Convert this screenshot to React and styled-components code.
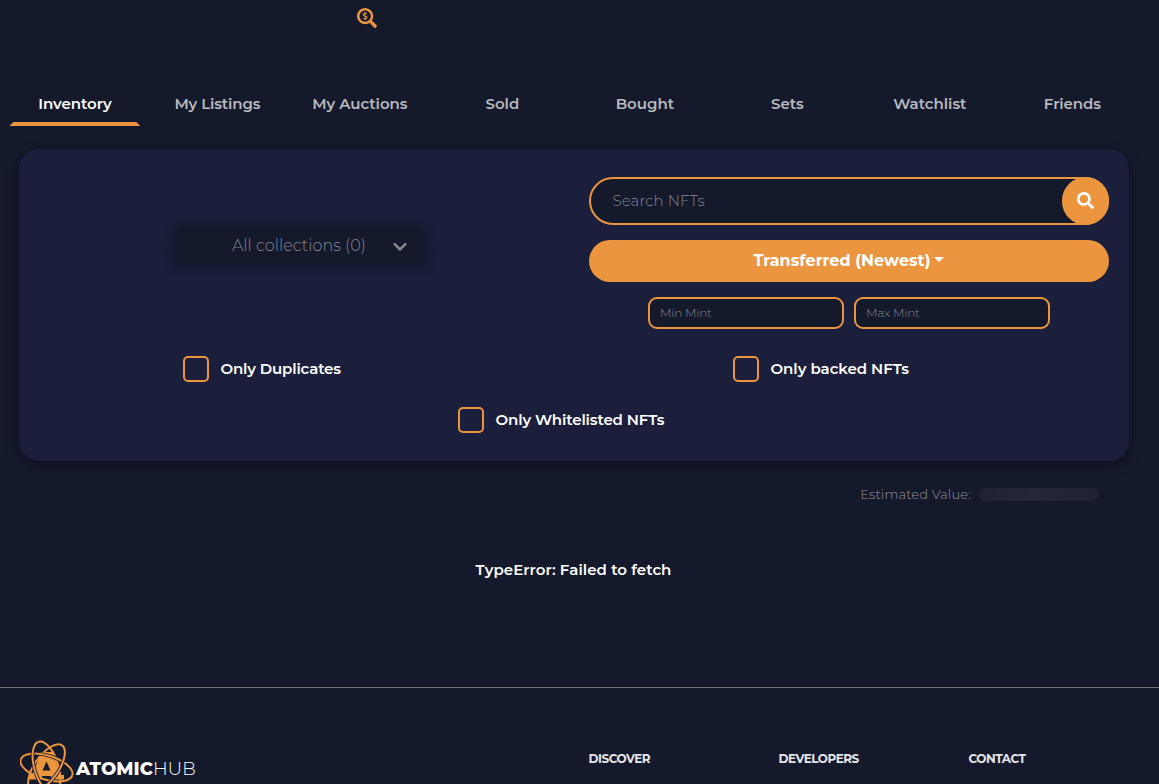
import React from "react";
import styled, { createGlobalStyle } from "styled-components";
import { FaSearch, FaSearchDollar } from "react-icons/fa";

const orange = "#eb953f";
const dark = "#14192c";

const GlobalStyle = createGlobalStyle`
    * {
        box-sizing: border-box;
    }
    html, body {
        margin: 0;
        height: 784px;
        overflow: hidden;
        background-color: ${dark};
    }
    body {
        color: #fff;
        font-family: Montserrat, Inter, "Open Sans", sans-serif;
        font-size: 15px;
    }
    input, button {
        font-family: inherit;
    }
`

const Page = styled.div`
    height: 784px;
    overflow: hidden;
`

const TopBar = styled.header`
    height: 80px;
    padding: 8px 0 0 357px;
    color: ${orange};
`

// tabs

const Tabs = styled.nav`
    display: grid;
    grid-template-columns: repeat(8, 142.5px);
    margin-left: 4.4px;
    height: 69px;
`

const Tab = styled.a`
    width: 131px;
    height: 46px;
    margin-left: 5px;
    padding-top: 14px;
    text-align: center;
    line-height: 20px;
    font-size: 15px;
    font-weight: 600;
    letter-spacing: ${props => props.$spacing || 0}px;
    color: ${props => props.$active ? '#fff' : '#b9babf'};
    white-space: nowrap;
    &::after {
        content: "";
        display: block;
        height: 4px;
        margin-top: 8px;
        background-color: ${props => props.$active ? orange : 'transparent'};
        clip-path: polygon(4px 0, calc(100% - 4px) 0, 100% 100%, 0 100%);
    }
`

// filter panel

const Panel = styled.section`
    width: 1110px;
    height: 312px;
    margin-left: 19px;
    padding: 28px 20px 0;
    border-radius: 20px;
    background-color: #1b1f3b;
    box-shadow: 0 4px 14px rgba(0, 0, 0, 0.35);
`

const Filters = styled.div`
    display: flex;
    justify-content: space-between;
    height: 152px;
`

const CollectionSelect = styled.div`
    display: flex;
    align-items: center;
    width: 250px;
    height: 38px;
    margin: 50px 0 0 136px;
    padding: 0 17px 0 57px;
    justify-content: space-between;
    border-radius: 10px;
    background-color: ${dark};
    box-shadow: 0 0 10px 3px ${dark};
    color: #858790;
    font-size: 16px;
    font-weight: 300;
    white-space: nowrap;
`

const SelectText = styled.span`
    letter-spacing: 0.05px;
    margin-top: -1px;
`

const SearchColumn = styled.div`
    display: flex;
    flex-direction: column;
    align-items: center;
    width: 520px;
    gap: 15px;
`

const SearchBox = styled.div`
    display: flex;
    flex: none;
    width: 520px;
    height: 48px;
    border: 2px solid ${orange};
    border-radius: 24px;
    background-color: ${dark};
`

const SearchInput = styled.input`
    flex: 1;
    padding: 0 21.5px 2px;
    border: none;
    outline: none;
    background: none;
    color: #fff;
    font-size: 15px;
    font-weight: 300;
    letter-spacing: 0.1px;
    &::placeholder {
        color: #808b96;
        opacity: 1;
    }
`

const SearchButton = styled.button`
    display: flex;
    align-items: center;
    justify-content: center;
    width: 47px;
    height: 48px;
    margin: -2px -2px 0 0;
    padding: 0 0 1px;
    border: none;
    border-radius: 24px;
    background-color: ${orange};
    color: #fff;
`

const SortButton = styled.button`
    display: flex;
    flex: none;
    align-items: center;
    justify-content: center;
    gap: 4px;
    width: 520px;
    height: 42px;
    padding: 0 0 2px;
    border: none;
    border-radius: 21px;
    background-color: ${orange};
    color: #fff;
    font-size: 16px;
    font-weight: 700;
    letter-spacing: 0.07px;
`

const Caret = styled.span`
    width: 0;
    height: 0;
    margin-top: -1px;
    border-top: 5px solid #fff;
    border-left: 5px solid transparent;
    border-right: 5px solid transparent;
`

const MintRow = styled.div`
    display: flex;
    gap: 10px;
`

const MintInput = styled.input`
    width: 196px;
    height: 32px;
    padding: 0 10px 2px;
    border: 2px solid ${orange};
    border-radius: 9px;
    background-color: ${dark};
    color: #fff;
    font-size: 12px;
    font-weight: 300;
    letter-spacing: -0.2px;
    &::placeholder {
        color: #888a90;
        opacity: 1;
    }
`

const CheckGrid = styled.div`
    display: grid;
    grid-template-columns: 550px 1fr;
    row-gap: 25px;
    margin-top: 27px;
    padding-left: 144px;
`

const Check = styled.label`
    display: flex;
    align-items: center;
    gap: 11.5px;
    height: 26px;
    font-size: 15px;
    font-weight: 600;
    letter-spacing: ${props => props.$spacing || 0}px;
    ${props => props.$wide && 'grid-column: 1 / 3; margin-left: 275px;'}
`

const CheckText = styled.span`
    padding-bottom: 2px;
`

const Box = styled.span`
    width: 26px;
    height: 26px;
    border: 2px solid ${orange};
    border-radius: 5px;
`

// value and error

const Estimate = styled.div`
    display: flex;
    align-items: center;
    justify-content: flex-end;
    gap: 8px;
    height: 20px;
    margin: 23px 60px 0 0;
    color: #92949e;
    font-size: 13px;
    font-weight: 300;
    letter-spacing: 0.18px;
`

const Placeholder = styled.span`
    width: 120px;
    height: 13px;
    border-radius: 7px;
    background: linear-gradient(90deg, #1e2234, #242738 45%, #1e2234);
`

const ErrorText = styled.p`
    width: 1147px;
    height: 20px;
    margin: 56px 0 107px;
    text-align: center;
    line-height: 20px;
    font-weight: 600;
    letter-spacing: 0.07px;
`

// footer

const Footer = styled.footer`
    display: grid;
    grid-template-columns: 568px 190px 190px 1fr;
    height: 97px;
    padding: 51px 0 0 20px;
    border-top: 1px solid #6f727b;
`

const Brand = styled.div`
    display: flex;
    align-items: flex-start;
`

const BrandName = styled.span`
    margin: 20px 0 0 2px;
    line-height: 20px;
    font-size: 18px;
    font-weight: 800;
    letter-spacing: 0.1px;
    b {
        font-weight: 300;
    }
`

const FooterTitle = styled.h4`
    margin: 12px 0 0 0.5px;
    line-height: 16px;
    font-size: 12px;
    font-weight: 700;
    color: #e4e5e8;
    letter-spacing: ${props => props.$spacing || 0}px;
`

// sweep picks the half of the orbit that passes in front of the letter
const orbits = [
    { angle: 17, sweep: 1 },
    { angle: 73, sweep: 0 },
    { angle: 125, sweep: 1 },
]

const AtomLogo = () => (
    <svg width="54" height="58" viewBox="0 0 54 58" fill="none">
        {orbits.map(({ angle }) => (
            <ellipse key={angle} cx="26.5" cy="28.5" rx="27" ry="12" stroke={orange} strokeWidth="2" transform={`rotate(${angle} 26.5 28.5)`} />
        ))}
        <path d="M21 13h13v3.5l7 19.5h3v4.5H31V37h-9v3.5H9V36h3l8-19.5z" fill={orange} />
        <path d="M26.5 22.5l4 9h-8z" fill={dark} />
        {orbits.map(({ angle, sweep }) => (
            <g key={angle} transform={`rotate(${angle} 26.5 28.5)`}>
                <path d={`M-.5 28.5A27 12 0 0 ${sweep} 53.5 28.5`} stroke={dark} strokeWidth="3.6" />
                <path d={`M-.5 28.5A27 12 0 0 ${sweep} 53.5 28.5`} stroke={orange} strokeWidth="2" />
            </g>
        ))}
    </svg>
)

const tabs = [
    { label: 'Inventory', active: true, spacing: -0.05 },
    { label: 'My Listings', spacing: -0.12 },
    { label: 'My Auctions', spacing: -0.05 },
    { label: 'Sold' },
    { label: 'Bought' },
    { label: 'Sets' },
    { label: 'Watchlist' },
    { label: 'Friends', spacing: -0.08 },
]

export default function App() {
    return <Page>
        <GlobalStyle />
        <TopBar><FaSearchDollar size={20} /></TopBar>
        <Tabs>
            {tabs.map(tab => (
                <Tab key={tab.label} $active={tab.active} $spacing={tab.spacing}>{tab.label}</Tab>
            ))}
        </Tabs>
        <Panel>
            <Filters>
                <CollectionSelect>
                    <SelectText>All collections (0)</SelectText>
                    <svg width="16" height="12" viewBox="0 0 16 12" fill="none" stroke="#85878f" strokeWidth="2.6">
                        <path d="M2 3.4l6 6 6-6" />
                    </svg>
                </CollectionSelect>
                <SearchColumn>
                    <SearchBox>
                        <SearchInput placeholder="Search NFTs" />
                        <SearchButton><FaSearch size={17} /></SearchButton>
                    </SearchBox>
                    <SortButton>Transferred (Newest)<Caret /></SortButton>
                    <MintRow>
                        <MintInput placeholder="Min Mint" />
                        <MintInput placeholder="Max Mint" />
                    </MintRow>
                </SearchColumn>
            </Filters>
            <CheckGrid>
                <Check $spacing={-0.15}><Box /><CheckText>Only Duplicates</CheckText></Check>
                <Check $spacing={-0.03}><Box /><CheckText>Only backed NFTs</CheckText></Check>
                <Check $spacing={-0.12} $wide><Box /><CheckText>Only Whitelisted NFTs</CheckText></Check>
            </CheckGrid>
        </Panel>
        <Estimate>Estimated Value:<Placeholder /></Estimate>
        <ErrorText>TypeError: Failed to fetch</ErrorText>
        <Footer>
            <Brand>
                <AtomLogo />
                <BrandName>ATOMIC<b>HUB</b></BrandName>
            </Brand>
            <FooterTitle $spacing={-0.45}>DISCOVER</FooterTitle>
            <FooterTitle $spacing={-0.48}>DEVELOPERS</FooterTitle>
            <FooterTitle $spacing={-0.45}>CONTACT</FooterTitle>
        </Footer>
    </Page>
}
